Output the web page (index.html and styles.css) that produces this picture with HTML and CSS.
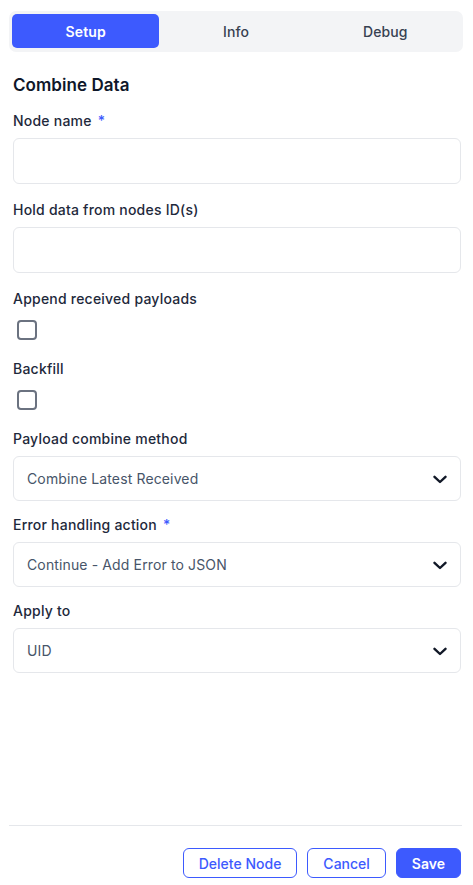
FILE: index.html
```html
<!DOCTYPE html>
<html lang="en">
<head>
<meta charset="utf-8">
<title>Combine Data</title>
<link rel="stylesheet" href="styles.css">
</head>
<body>
<div class="page">
  <div class="tabs">
    <button class="tab active">Setup</button>
    <button class="tab">Info</button>
    <button class="tab">Debug</button>
  </div>
  <div class="form">
    <h2 class="title">Combine Data</h2>
    <div class="field">
      <label class="label">Node name <span class="req">*</span></label>
      <input class="input" type="text">
    </div>
    <div class="field">
      <label class="label">Hold data from nodes ID(s)</label>
      <input class="input" type="text">
    </div>
    <div class="field field-check">
      <label class="label">Append received payloads</label>
      <div class="check-wrap"><span class="check"></span></div>
    </div>
    <div class="field field-check">
      <label class="label">Backfill</label>
      <div class="check-wrap"><span class="check"></span></div>
    </div>
    <div class="field field-sel">
      <label class="label">Payload combine method</label>
      <div class="select"><span>Combine Latest Received</span><svg class="chev" width="14" height="9" viewBox="0 0 14 9"><path d="M1.5 1.8 L7 7 L12.5 1.8" fill="none" stroke="#111827" stroke-width="2.4" stroke-linecap="round" stroke-linejoin="round"/></svg></div>
    </div>
    <div class="field field-sel">
      <label class="label">Error handling action <span class="req">*</span></label>
      <div class="select"><span>Continue - Add Error to JSON</span><svg class="chev" width="14" height="9" viewBox="0 0 14 9"><path d="M1.5 1.8 L7 7 L12.5 1.8" fill="none" stroke="#111827" stroke-width="2.4" stroke-linecap="round" stroke-linejoin="round"/></svg></div>
    </div>
    <div class="field field-sel">
      <label class="label">Apply to</label>
      <div class="select"><span>UID</span><svg class="chev" width="14" height="9" viewBox="0 0 14 9"><path d="M1.5 1.8 L7 7 L12.5 1.8" fill="none" stroke="#111827" stroke-width="2.4" stroke-linecap="round" stroke-linejoin="round"/></svg></div>
    </div>
  </div>
  <div class="footer">
    <button class="btn btn-outline btn-delete">Delete Node</button>
    <button class="btn btn-outline btn-cancel">Cancel</button>
    <button class="btn btn-primary">Save</button>
  </div>
</div>
</body>
</html>
```
FILE: styles.css
```css
* { box-sizing: border-box; }
html, body { margin: 0; padding: 0; background: #fff; }
body {
  font-family: Inter, "Noto Sans", "Liberation Sans", sans-serif;
  color: #111827;
}
.page {
  min-height: 885px;
  display: flex;
  flex-direction: column;
  padding: 11px 11px 0 9px;
}
.tabs {
  display: grid;
  grid-template-columns: 1fr 1fr 1fr;
  background: #f3f4f6;
  border-radius: 7px;
  padding: 3px 3px 4px 3px;
  margin-right: -1px;
}
.tab {
  height: 34px;
  border: 0;
  background: transparent;
  border-radius: 5px;
  font-family: inherit;
  font-size: 14px;
  font-weight: 500;
  color: #374151;
  letter-spacing: 0.1px;
  cursor: pointer;
}
.tab.active {
  background: #3d5afe;
  color: #fff;
  font-weight: 600;
  margin-right: 2px;
}
.form {
  display: flex;
  flex-direction: column;
  padding: 0 1px 0 4px;
}
.title {
  margin: 21px 0 14px;
  font-size: 17px;
  line-height: 24px;
  font-weight: 600;
  color: #0f172a;
  letter-spacing: 0.05px;
}
.field {
  display: flex;
  flex-direction: column;
  gap: 7px;
  margin-bottom: 16px;
}
.field-check { margin-bottom: 15px; }
.field-sel { margin-bottom: 14px; }
.label {
  font-size: 14px;
  line-height: 20px;
  font-weight: 500;
  color: #1e293b;
  letter-spacing: 0.22px;
}
.req { color: #3d5afe; margin-left: 2px; }
.input {
  height: 46px;
  border: 1px solid #e5e7eb;
  border-radius: 6px;
  font-family: inherit;
  font-size: 14px;
  padding: 0 14px;
  outline: none;
}
.check-wrap { padding: 4px; }
.check {
  display: block;
  width: 20px;
  height: 20px;
  border: 2px solid #6b7280;
  border-radius: 4px;
  background: #fff;
}
.select {
  height: 45px;
  border: 1px solid #e5e7eb;
  border-radius: 6px;
  display: flex;
  align-items: center;
  justify-content: space-between;
  padding: 0 13px 0 13px;
  font-size: 14px;
  letter-spacing: 0.13px;
  color: #475569;
}
.chev { display: block; margin-top: 1px; }
.footer {
  margin-top: auto;
  border-top: 1px solid #e5e7eb;
  padding: 22px 1px 7px 0;
  display: flex;
  justify-content: flex-end;
  gap: 10px;
}
.btn {
  height: 30px;
  border-radius: 6px;
  font-family: inherit;
  font-size: 14px;
  font-weight: 500;
  padding: 0 15px;
  cursor: pointer;
}
.btn-outline {
  background: #fff;
  border: 1px solid #3d5afe;
  color: #3d5afe;
}
.btn-primary {
  background: #3d5afe;
  border: 1px solid #3d5afe;
  color: #fff;
  font-weight: 600;
  padding: 0 15px;
}
```
